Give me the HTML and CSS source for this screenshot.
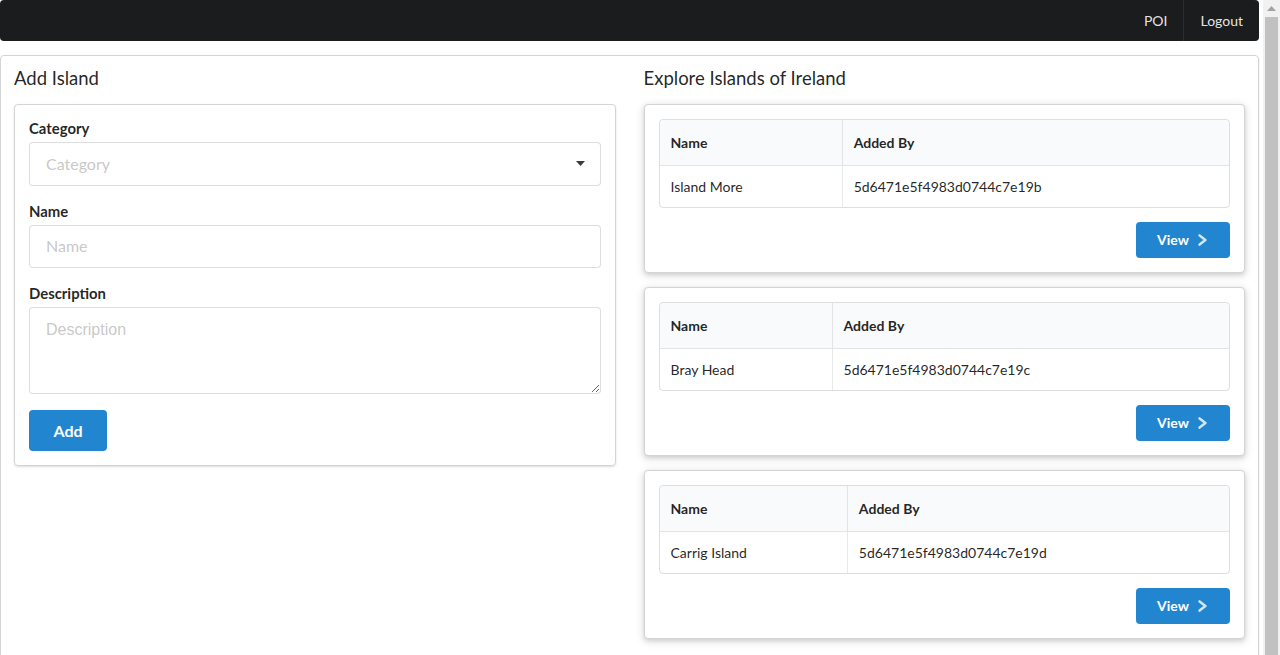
FILE: index.html
```html
<!DOCTYPE html>
<html lang="en">
<head>
<meta charset="utf-8">
<title>Islands of Ireland</title>
<link rel="stylesheet" href="styles.css">
</head>
<body>
<div class="page">
  <nav class="menu">
    <a class="menu-item" href="#">POI</a>
    <a class="menu-item divided" href="#">Logout</a>
  </nav>

  <main class="segment main">
    <section class="column">
      <h3 class="header">Add Island</h3>
      <form class="raised-segment form">
        <div class="field">
          <label class="label">Category</label>
          <div class="dropdown">
            <span class="placeholder">Category</span>
            <svg class="caret" width="9" height="5" viewBox="0 0 9 5"><path d="M0 0 H9 L4.5 5 Z" fill="#3a3a3a"/></svg>
          </div>
        </div>
        <div class="field">
          <label class="label">Name</label>
          <input class="input" type="text" placeholder="Name">
        </div>
        <div class="field">
          <label class="label">Description</label>
          <textarea class="textarea" placeholder="Description"></textarea>
        </div>
        <button class="btn btn-large" type="button">Add</button>
      </form>
    </section>

    <section class="column">
      <h3 class="header">Explore Islands of Ireland</h3>

      <div class="card">
        <table class="table">
          <thead><tr><th>Name</th><th>Added By</th></tr></thead>
          <tbody><tr><td>Island More</td><td>5d6471e5f4983d0744c7e19b</td></tr></tbody>
        </table>
        <div class="actions">
          <button class="btn btn-view" type="button">View
            <svg class="chev" width="10" height="12" viewBox="0 0 10 12"><path d="M1.6 1.4 L7.4 6 L1.6 10.6" fill="none" stroke="#fff" stroke-width="2.5" stroke-linecap="round" stroke-linejoin="round"/></svg>
          </button>
        </div>
      </div>

      <div class="card">
        <table class="table">
          <thead><tr><th>Name</th><th>Added By</th></tr></thead>
          <tbody><tr><td>Bray Head</td><td>5d6471e5f4983d0744c7e19c</td></tr></tbody>
        </table>
        <div class="actions">
          <button class="btn btn-view" type="button">View
            <svg class="chev" width="10" height="12" viewBox="0 0 10 12"><path d="M1.6 1.4 L7.4 6 L1.6 10.6" fill="none" stroke="#fff" stroke-width="2.5" stroke-linecap="round" stroke-linejoin="round"/></svg>
          </button>
        </div>
      </div>

      <div class="card">
        <table class="table">
          <thead><tr><th>Name</th><th>Added By</th></tr></thead>
          <tbody><tr><td>Carrig Island</td><td>5d6471e5f4983d0744c7e19d</td></tr></tbody>
        </table>
        <div class="actions">
          <button class="btn btn-view" type="button">View
            <svg class="chev" width="10" height="12" viewBox="0 0 10 12"><path d="M1.6 1.4 L7.4 6 L1.6 10.6" fill="none" stroke="#fff" stroke-width="2.5" stroke-linecap="round" stroke-linejoin="round"/></svg>
          </button>
        </div>
      </div>
    </section>
  </main>
</div>

<div class="scrollbar" aria-hidden="true">
  <div class="scroll-arrow">
    <svg width="9" height="5" viewBox="0 0 9 5"><path d="M0 5 L4.5 0 L9 5 Z" fill="#a3a3a3"/></svg>
  </div>
  <div class="scroll-thumb"></div>
</div>
</body>
</html>
```

FILE: styles.css
```css
* { box-sizing: border-box; }

html, body {
  margin: 0;
  padding: 0;
  background: #ffffff;
}

body {
  font-family: Lato, "Helvetica Neue", Arial, sans-serif;
  font-size: 14px;
  line-height: 20px;
  color: rgba(0, 0, 0, 0.87);
}

.page {
  width: 1259px;
}

/* top menu */
.menu {
  display: flex;
  justify-content: flex-end;
  height: 41px;
  background: #1b1c1d;
  border-radius: 4px;
}

.menu-item {
  display: block;
  padding: 0 16px;
  line-height: 41px;
  font-size: 14px;
  color: rgba(255, 255, 255, 0.9);
  text-decoration: none;
}

.menu-item.divided {
  border-left: 1px solid rgba(255, 255, 255, 0.08);
}

/* main segment */
.segment {
  border: 1px solid #d4d4d5;
  border-radius: 4px;
  box-shadow: 0 1px 2px 0 rgba(34, 36, 38, 0.15);
}

.main {
  margin-top: 14px;
  padding: 11px 13px 14px 13px;
  display: grid;
  grid-template-columns: 1fr 1fr;
  column-gap: 28px;
  align-items: start;
}

.header {
  margin: 0 0 14px 0;
  font-size: 18.5px;
  line-height: 23px;
  font-weight: 400;
  color: rgba(0, 0, 0, 0.87);
}

.raised-segment {
  border: 1px solid #d4d4d5;
  border-radius: 4px;
  box-shadow: 0 1px 2px 0 rgba(34, 36, 38, 0.15);
  padding: 14px;
}

/* form */
.form {
  font-size: 16px;
}

.field {
  margin-bottom: 16px;
}

.label {
  display: block;
  margin: 0 0 4px 0;
  font-size: 14.86px;
  line-height: 19px;
  font-weight: 700;
  color: rgba(0, 0, 0, 0.87);
}

.dropdown,
.input {
  display: flex;
  align-items: center;
  width: 100%;
  height: 43.5px;
  padding: 0 16px 1px 16px;
  border: 1px solid rgba(34, 36, 38, 0.15);
  border-radius: 4px;
  background: #fff;
  font-family: Lato, "Helvetica Neue", Arial, sans-serif;
  font-size: 16px;
  line-height: 19px;
  color: rgba(0, 0, 0, 0.87);
  outline: none;
}

.dropdown {
  justify-content: space-between;
  padding-right: 15px;
}

.placeholder {
  color: rgba(191, 191, 191, 0.87);
}

.input::placeholder {
  color: rgba(191, 191, 191, 0.87);
}

.caret {
  display: block;
  margin-top: 1px;
}

.textarea {
  display: block;
  width: 100%;
  height: 87px;
  padding: 12px 16px;
  border: 1px solid rgba(34, 36, 38, 0.15);
  border-radius: 4px;
  font-family: "Liberation Sans", Arial, sans-serif;
  font-size: 16px;
  line-height: 20px;
  color: rgba(0, 0, 0, 0.87);
  resize: vertical;
  outline: none;
}

.textarea::placeholder {
  color: rgba(191, 191, 191, 0.87);
}

/* buttons */
.btn {
  display: inline-flex;
  align-items: center;
  border: none;
  border-radius: 4px;
  background: #2185d0;
  color: #fff;
  font-family: Lato, "Helvetica Neue", Arial, sans-serif;
  font-weight: 700;
  cursor: pointer;
}

.btn-large {
  height: 41px;
  padding: 0 24.5px;
  font-size: 16px;
  line-height: 16px;
}

.btn-view {
  height: 36px;
  padding: 0 21px;
  font-size: 14px;
  line-height: 14px;
}

.chev {
  display: block;
  margin-left: 9px;
  margin-right: 1px;
  opacity: 0.8;
}

/* cards */
.card {
  border: 1px solid #d4d4d5;
  border-radius: 4px;
  box-shadow: 0 2px 4px 0 rgba(34, 36, 38, 0.12), 0 2px 10px 0 rgba(34, 36, 38, 0.15);
  padding: 14px;
  margin-bottom: 14px;
  background: #fff;
}

.table {
  width: 100%;
  border-collapse: separate;
  border-spacing: 0;
  border: 1px solid rgba(34, 36, 38, 0.15);
  border-radius: 4px;
  font-size: 14px;
}

.table th {
  background: #f9fafb;
  text-align: left;
  font-weight: 700;
  line-height: 20px;
  padding: 13px 11px 12px 11px;
  border-bottom: 1px solid rgba(34, 36, 38, 0.1);
  color: rgba(0, 0, 0, 0.87);
}

.table th:first-child { border-top-left-radius: 4px; }
.table th:last-child { border-top-right-radius: 4px; }

.table td {
  line-height: 20px;
  padding: 11px 11px 10px 11px;
  color: rgba(0, 0, 0, 0.87);
}

.table th:first-child,
.table td:first-child {
  padding-right: 16px;
}

.table th + th,
.table td + td {
  border-left: 1px solid rgba(34, 36, 38, 0.1);
}

.actions {
  display: flex;
  justify-content: flex-end;
  margin-top: 14px;
}

/* decorative browser scrollbar seen in the screenshot */
.scrollbar {
  position: fixed;
  top: 0;
  right: 0;
  bottom: 0;
  width: 17px;
  background: #f1f1f1;
  display: flex;
  flex-direction: column;
}

.scroll-arrow {
  height: 17px;
  display: flex;
  align-items: center;
  justify-content: center;
}

.scroll-thumb {
  flex: 1;
  margin: 0 2px;
  background: #c1c1c1;
}
```
